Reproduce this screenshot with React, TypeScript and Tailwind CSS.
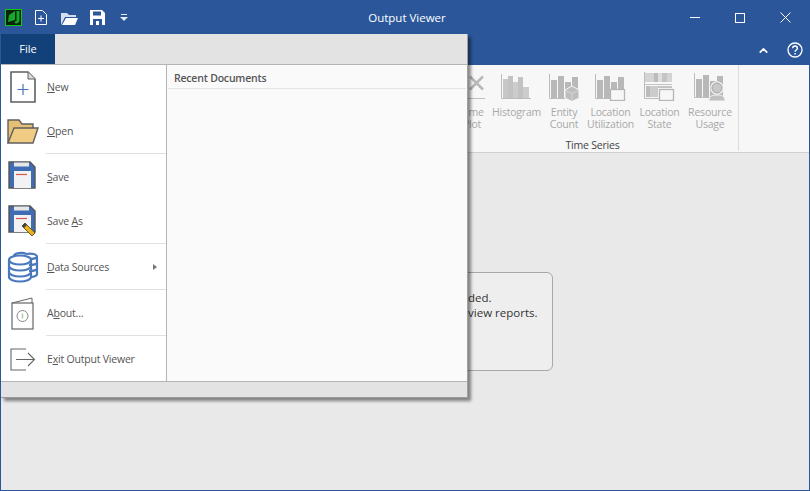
import React from "react";
import { ChevronUp } from "lucide-react";

const font = { fontFamily: "'Open Sans', 'Noto Sans', sans-serif" };

// --- ribbon icons (all disabled grey) ---
const Axis = () => <path d="M.5 0v24.500H30" stroke="#bcbcbc" fill="none" />;

const Bars = () => (
  <>
    {[6, 2, 8, 3].map((top, i) => (
      <rect key={i} x={2 + i * 7} y={top} width={6} height={24 - top} fill="#b8b8b8" />
    ))}
  </>
);

const TimePlotIcon = () => (
  <svg width="40" height="27" viewBox="0 0 40 27" className="translate-x-[-3px]">
    <path d="M21 2.500l13 13M21 15.500l13-13" stroke="#b8b8b8" strokeWidth="2.500" fill="none" />
    <path d="M16 24.500h20" stroke="#c0c0c0" fill="none" />
  </svg>
);

const HistogramIcon = () => (
  <svg width="31" height="27" viewBox="0 0 31 27">
    <rect x="2" y="5" width="5" height="19" fill="#c8c8c8" />
    <rect x="7" y="2" width="5" height="22" fill="#c2c2c2" />
    <rect x="12" y="8" width="5" height="16" fill="#cccccc" />
    <rect x="17" y="3" width="5" height="21" fill="#c2c2c2" />
    <rect x="22" y="13" width="6" height="11" fill="#cccccc" />
    <Axis />
  </svg>
);

const EntityIcon = () => (
  <svg width="31" height="27" viewBox="0 0 31 27">
    <Bars />
    <Axis />
    <path d="M16 16l7-4 7 4v8l-7 3.500-7-3.500z" fill="#bdbdbd" stroke="#f7f7f7" />
    <path d="M16.500 16.500l6.500 3 6.500-3M23 20v7" stroke="#d6d6d6" fill="none" />
  </svg>
);

const LocationUtilIcon = () => (
  <svg width="31" height="27" viewBox="0 0 31 27">
    <Bars />
    <Axis />
    <rect x="15.500" y="15.500" width="14" height="11" fill="#f7f7f7" stroke="#b5b5b5" strokeWidth="1.300" />
  </svg>
);

const LocationStateIcon = () => (
  <svg width="31" height="29" viewBox="0 0 31 29">
    <path d="M.5 0v26.500H15" stroke="#bcbcbc" fill="none" />
    <rect x="1" y="1" width="9" height="9" fill="#d4d4d4" />
    <rect x="10" y="1" width="4" height="9" fill="#bcbcbc" />
    <rect x="14" y="1" width="4" height="9" fill="#dedede" />
    <rect x="18" y="1" width="5" height="9" fill="#c4c4c4" />
    <rect x="23" y="1" width="5" height="9" fill="#d4d4d4" />
    <path d="M1 12.500h27" stroke="#c4c4c4" />
    <rect x="2" y="14" width="4" height="11" fill="#bcbcbc" />
    <rect x="6" y="14" width="8" height="11" fill="#cccccc" />
    <rect x="14" y="14" width="14" height="2" fill="#c4c4c4" />
    <rect x="15.500" y="17.500" width="14" height="11" fill="#f7f7f7" stroke="#b5b5b5" strokeWidth="1.300" />
  </svg>
);

const ResourceIcon = () => (
  <svg width="32" height="28" viewBox="0 0 32 28">
    <Bars />
    <Axis />
    <circle cx="23" cy="15" r="6" fill="#c8c8c8" stroke="#f2f2f2" strokeWidth="1.500" />
    <circle cx="23" cy="15" r="5" fill="none" stroke="#a8a8a8" />
    <path d="M15 28c0-5 3-6 8-6s8 1 8 6z" fill="#c0c0c0" stroke="#f2f2f2" />
  </svg>
);

// --- file menu icons ---
const NewIcon = () => (
  <svg width="26" height="32" viewBox="0 0 26 32">
    <path d="M1 1h17l7 7v23H1z" fill="#fff" stroke="#5f5f5f" strokeWidth="1.600" />
    <path d="M18 1v7h7" fill="#dcdcdc" stroke="#5f5f5f" />
    <path d="M13 13v11M7.500 18.500h11" stroke="#4a75b5" strokeWidth="1.200" />
  </svg>
);

const OpenIcon = () => (
  <svg width="32" height="26" viewBox="0 0 32 26">
    <path d="M1 25V2h11l3 4h11v5" fill="#e4bf75" stroke="#5f5f5f" strokeWidth="1.400" />
    <path d="M1 25l6-15h24l-5 15z" fill="#efcb84" stroke="#5f5f5f" strokeWidth="1.400" />
  </svg>
);

const SaveIcon = ({ pencil }: { pencil?: boolean }) => (
  <svg width="30" height="32" viewBox="0 0 30 32">
    <path d="M1 1h21l5 5v21H1z" fill="#3f6cb3" stroke="#555" strokeWidth="1.400" />
    <rect x="6" y="1.500" width="15" height="4" fill="#e6e6e6" />
    <rect x="6" y="10" width="17" height="17" fill="#f2f2f2" />
    <path d="M8 13.500h11" stroke="#d9534f" strokeWidth="1.200" />
    {pencil && (
      <>
        <path d="M14 21l3-3 10 10-3 3z" fill="#e8b21e" stroke="#6b5b20" />
        <path d="M14 21l3-3 2 2-3 3z" fill="#444" />
      </>
    )}
  </svg>
);

const DatabaseIcon = () => (
  <svg width="32" height="32" viewBox="0 0 32 32" fill="none" stroke="#4a78bd" strokeWidth="2.200">
    <path d="M19 3c-3-2-12-1-12 2M19 3c6-1 11 0 11 3v17c0 1.500-2 2.500-5 3" fill="#fff" />
    <path d="M22 8c4 0 8-1 8-2M22 14c4 0 8-1 8-2M22 20c4 0 8-1 8-2" />
    <ellipse cx="13" cy="9" rx="11" ry="4.500" fill="#fff" />
    <path d="M2 9v17c0 2.500 5 4.500 11 4.500s11-2 11-4.500V9M2 15c0 2.500 5 4.500 11 4.500s11-2 11-4.500M2 21c0 2.500 5 4.500 11 4.500s11-2 11-4.500" />
  </svg>
);

const AboutIcon = () => (
  <svg width="24" height="33" viewBox="0 0 24 33" fill="none">
    <rect x="1" y="6" width="21" height="26" stroke="#666" strokeWidth="1.200" />
    <path d="M1 6l20-5v5" stroke="#666" />
    <circle cx="11.500" cy="19" r="5.500" stroke="#8a8a8a" />
    <path d="M11.500 16.500v5" stroke="#a6cf98" strokeWidth="1.400" />
  </svg>
);

const ExitIcon = () => (
  <svg width="26" height="23" viewBox="0 0 26 23" fill="none" stroke="#666" strokeWidth="1.100">
    <path d="M16 1H1v21h15M6 11.500h18M18 5l6.500 6.500L18 18" />
  </svg>
);

// Hotkey underline inside a menu label
const U = ({ children }: { children: React.ReactNode }) => <span className="underline">{children}</span>;

const MenuRow = ({ icon, children, arrow }: { icon: React.ReactNode; children: React.ReactNode; arrow?: boolean }) => (
  <div className="flex h-[44px] items-center">
    <div className="flex w-[46px] shrink-0 justify-center pr-[3px]">{icon}</div>
    <span className="flex-1 pt-[2px] text-[10.500px] tracking-[-0.2px] text-[#555]">{children}</span>
    {arrow && <span className="mr-[9px] h-0 w-0 border-y-[3.500px] border-l-[4px] border-y-transparent border-l-[#777]" />}
  </div>
);

const Sep = () => <div className="mb-[1px] ml-[45px] h-[1px] bg-[#e0e0e0]" />;

const RibbonItem = ({ w, icon, lines }: { w: string; icon: React.ReactNode; lines: string[] }) => (
  <div className={`flex shrink-0 flex-col items-center ${w}`}>
    <div className="flex h-[33px] items-end">{icon}</div>
    <div className="mt-[5px] text-center text-[10.500px] leading-[12px] tracking-[-0.2px] text-[#a8a8a8]">
      {lines.map((l) => (
        <div key={l}>{l}</div>
      ))}
    </div>
  </div>
);

function FileMenu() {
  return (
    <div className="absolute left-0 top-[34px] w-[467px] border-r border-[#a0a0a0] bg-[#e3e3e3] shadow-[3px_3px_3px_rgba(0,0,0,0.45)]">
      <div className="h-[30px]">
        <div className="flex h-full w-[54px] items-center justify-center bg-[#124078] text-[11px] text-white">File</div>
      </div>
      <div className="flex h-[318px] border-y border-[#b4b4b4] bg-white">
        <div className="w-[166px] shrink-0 border-r border-[#b4b4b4]">
          <MenuRow icon={<NewIcon />}>
            <U>N</U>ew
          </MenuRow>
          <MenuRow icon={<OpenIcon />}>
            <U>O</U>pen
          </MenuRow>
          <Sep />
          <MenuRow icon={<SaveIcon />}>
            <U>S</U>ave
          </MenuRow>
          <MenuRow icon={<SaveIcon pencil />}>
            Save <U>A</U>s
          </MenuRow>
          <Sep />
          <MenuRow icon={<DatabaseIcon />} arrow>
            <U>D</U>ata Sources
          </MenuRow>
          <Sep />
          <MenuRow icon={<AboutIcon />}>
            A<U>b</U>out...
          </MenuRow>
          <Sep />
          <MenuRow icon={<ExitIcon />}>
            E<U>x</U>it Output Viewer
          </MenuRow>
        </div>
        <div className="flex-1 bg-[#fafafa]">
          <div className="mx-[1px] flex h-[24px] items-center border-b border-[#e4e4e4] pl-[6px] pt-[5px] text-[10.500px] font-semibold tracking-[-0.2px] text-[#555]">
            Recent Documents
          </div>
        </div>
      </div>
      <div className="h-[16px] border-b border-[#9a9a9a]" />
    </div>
  );
}

export default function App() {
  return (
    <div className="relative flex h-[491px] w-[810px] flex-col overflow-hidden border border-t-0 border-[#2b579a] bg-[#e9e9e9] text-[#333]" style={font}>
      {/* title bar */}
      <div className="flex h-[35px] shrink-0 items-center bg-[#2b579a]">
        <svg className="ml-[4px]" width="17" height="17" viewBox="0 0 17 17">
          <rect x="0.500" y="0.500" width="16" height="16" fill="#0a240a" stroke="#12c812" />
          <path d="M3 13l1-7 6-4v9zM11.500 2h3v9c0 3-3 4-5 3l1-2h1z" fill="#17a82a" />
        </svg>
        <svg className="ml-[13px]" width="12" height="15" viewBox="0 0 12 15" fill="none" stroke="#fff">
          <path d="M.5.500h7l4 4v10H.5zM6 5.500v6M3 8.500h6" />
        </svg>
        <svg className="ml-[14px]" width="17" height="14" viewBox="0 0 17 14">
          <path d="M0 14V2h6l2 2h7v2H4z" fill="#d5dfee" />
          <path d="M1 14l4-7h12l-3 7z" fill="#fff" />
        </svg>
        <svg className="ml-[12px]" width="15" height="15" viewBox="0 0 15 15">
          <path d="M0 0h12l3 3v12H0z" fill="#fff" />
          <rect x="3" y="1.500" width="8" height="4" fill="#2b579a" />
          <rect x="3" y="9" width="9" height="6" fill="#2b579a" />
          <rect x="6" y="11" width="3" height="4" fill="#fff" />
        </svg>
        <svg className="ml-[15px]" width="8" height="8" viewBox="0 0 8 8" fill="#e6ecf5">
          <path d="M1 0h6v1H1zM0 3h8L4 7z" />
        </svg>
        <div className="flex-1 pr-[4px] text-center text-[11.500px] text-white">Output Viewer</div>
        <svg width="10" height="1" className="mr-[35px]">
          <rect width="10" height="1" fill="#fff" />
        </svg>
        <svg width="10" height="10" className="mr-[35px]" fill="none" stroke="#fff">
          <rect x="0.500" y="0.500" width="9" height="9" />
        </svg>
        <svg width="11" height="11" className="mr-[18px]" stroke="#fff">
          <path d="M.5.500l10 10M10.500.500l-10 10" />
        </svg>
      </div>
      {/* ribbon tab row */}
      <div className="flex h-[30px] shrink-0 items-center justify-end bg-[#2b579a] pr-[6px]">
        <ChevronUp size={13} strokeWidth={3} className="mr-[17px] text-white" />
        <svg width="16" height="16" viewBox="0 0 16 16" fill="none" stroke="#fff">
          <circle cx="8" cy="8" r="7" strokeWidth="1.300" />
          <path d="M5.700 6.200c0-3 4.700-3 4.700 0 0 1.800-2.300 1.800-2.300 3.500" strokeWidth="1.400" />
          <path d="M8.100 11v1.500" strokeWidth="1.500" />
        </svg>
      </div>
      {/* ribbon */}
      <div className="flex h-[88px] shrink-0 border-b border-[#cfcfcf] bg-[#f7f7f7] pl-[438px]">
        <div className="relative flex h-[86px] w-[300px] flex-col border-r border-[#dcdcdc]">
          <div className="flex pt-[3px]">
            <RibbonItem w="w-[53px] pl-[13px]" icon={<TimePlotIcon />} lines={["Time", "Plot"]} />
            <RibbonItem w="w-[49px]" icon={<HistogramIcon />} lines={["Histogram"]} />
            <RibbonItem w="w-[46px]" icon={<EntityIcon />} lines={["Entity", "Count"]} />
            <RibbonItem w="w-[47px]" icon={<LocationUtilIcon />} lines={["Location", "Utilization"]} />
            <RibbonItem w="w-[51px]" icon={<LocationStateIcon />} lines={["Location", "State"]} />
            <RibbonItem w="w-[50px]" icon={<ResourceIcon />} lines={["Resource", "Usage"]} />
          </div>
          <div className="mt-auto pl-[8px] text-center text-[10.500px] leading-[12px] tracking-[-0.2px] text-[#444]">Time Series</div>
        </div>
      </div>
      {/* empty state message */}
      <div className="flex flex-1 items-start justify-center pl-[1px] pt-[119px]">
        <div className="flex h-[99px] w-[294px] flex-col items-end rounded-[6px] border border-[#a8a8a8] bg-[#eeeeee] pt-[17px] text-[11.500px] leading-[15px] text-[#333]">
          <div className="whitespace-nowrap pr-[60px]">No output file has been loaded.</div>
          <div className="whitespace-nowrap pr-[14px]">Open an output file to view reports.</div>
        </div>
      </div>
      <FileMenu />
    </div>
  );
}
